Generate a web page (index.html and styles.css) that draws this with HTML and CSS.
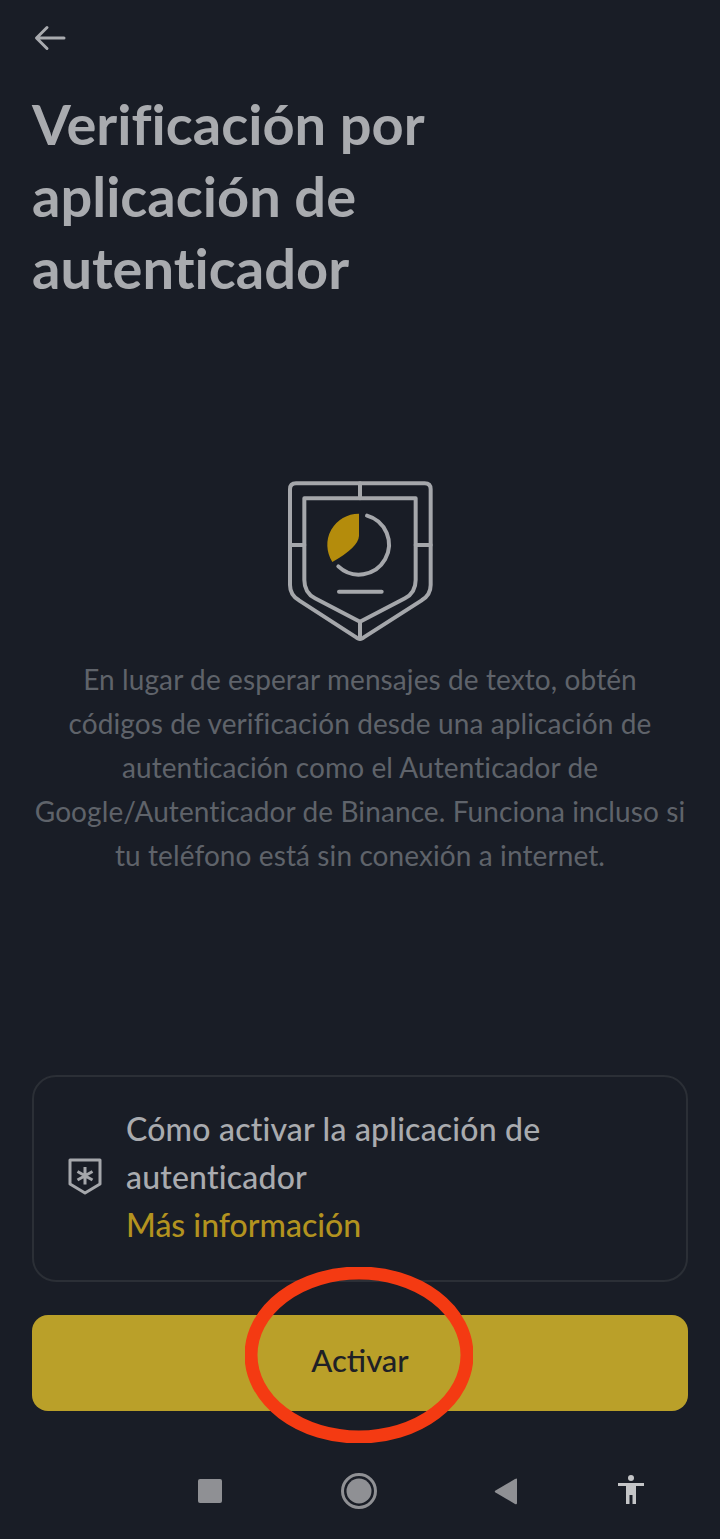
FILE: index.html
```html
<!DOCTYPE html>

<html>
    <head>
        <title>Verificación por aplicación de autenticador</title>
        <link rel="stylesheet" href="styles.css">
    </head>

    <body>
        <div class="screen">
            <div class="topbar">
                <svg class="back" viewBox="0 0 32 26" fill="none">
                    <path d="M3 13H30M13 2.500L2.500 13L13 23.500" />
                </svg>
            </div>

            <h1>Verificación por aplicación de autenticador</h1>

            <svg class="shield" viewBox="0 0 540 540" fill="none">
                <path class="line" d="M78 40H464Q482 40 482 58V345Q482 375 455 391L280 503Q270 509 260 503L87 391Q60 375 60 345V58Q60 40 78 40Z" />
                <path class="line" d="M103 85H437V330Q437 368 405 385L270 455L135 385Q103 368 103 330Z" />
                <path class="line" d="M270 40V85M60 225H103M437 225H482M270 455V507" />
                <path class="line" d="M291 137A90 90 0 1 1 205 289" />
                <path class="line" d="M207 365H335" />
                <path class="pie" d="M267 131V198Q265 232 187 276A94 94 0 0 1 267 131Z" />
            </svg>

            <p class="desc">En lugar de esperar mensajes de texto, obtén<br>códigos de verificación desde una aplicación de<br>autenticación como el Autenticador de<br>Google/Autenticador de Binance. Funciona incluso si<br>tu teléfono está sin conexión a internet.</p>

            <div class="card">
                <svg class="card-icon" viewBox="0 0 34 37" fill="none">
                    <path class="card-shield" d="M2 2H32V26L17 35L2 26Z" />
                    <path class="card-star" d="M17 9V26.500M9.500 13.500L24.500 22M24.500 13.500L9.500 22" />
                </svg>
                <div class="card-text">
                    <div class="card-title">Cómo activar la aplicación de autenticador</div>
                    <a href="#">Más información</a>
                </div>
            </div>

            <div class="action">
                <button type="button" class="btn-default">Activar</button>
                <svg class="circle-mark" viewBox="0 0 228 176" fill="none">
                    <ellipse cx="114" cy="88" rx="108" ry="82" />
                </svg>
            </div>

            <div class="navbar">
                <svg width="24" height="24" viewBox="0 0 24 24"><rect class="nav-fill" x="0" y="0" width="24" height="24" rx="2" /></svg>
                <svg width="36" height="36" viewBox="0 0 36 36">
                    <circle class="nav-ring" cx="18" cy="18" r="16.500" />
                    <circle class="nav-fill" cx="18" cy="18" r="12.500" />
                </svg>
                <svg width="24" height="27" viewBox="0 0 24 27"><path class="nav-fill" d="M23 1V25Q23 27 21 26L1.500 14.500Q0 13.500 1.500 12.500L21 1Q23 0 23 1Z" /></svg>
                <svg width="28" height="30" viewBox="0 0 28 30">
                    <circle class="nav-person" cx="14" cy="3" r="3" />
                    <path class="nav-person" d="M1 8H27V11H19V29H15.500V20H12.500V29H9V11H1Z" />
                </svg>
            </div>
        </div>
    </body>
</html>
```

FILE: styles.css
```css
* {box-sizing: border-box}

body {
  margin: 0;
  background-color: #191d26;
  font-family: Lato, "Open Sans", sans-serif;
  font-variant-ligatures: none;
}

.screen {
  height: 1539px;
  padding: 0 32px;
  display: flex;
  flex-direction: column;
  overflow: hidden;
}

.topbar {
  height: 88px;
  padding-top: 25px;
}

.back {
  display: block;
  width: 32px;
  height: 26px;
  margin-left: 2px;
  stroke: #a9abaf;
  stroke-width: 3;
  stroke-linecap: round;
  stroke-linejoin: round;
}

h1 {
  margin: 0;
  color: #a9abaf;
  font-size: 56px;
  line-height: 72px;
  font-weight: 700;
  width: 480px;
}

.shield {
  display: block;
  width: 180px;
  height: 180px;
  margin: 166px auto 0;
}

.line {
  stroke: #a5a7ab;
  stroke-width: 12;
  stroke-linecap: round;
  stroke-linejoin: round;
}

.pie {
  fill: #b48c0c;
}

.desc {
  margin: 7px 0 0;
  color: #5f636a;
  font-size: 28px;
  line-height: 44px;
  letter-spacing: 0.1px;
  text-align: center;
}

.card {
  margin-top: auto;
  height: 207px;
  padding: 0 32px 4px 34px;
  display: flex;
  align-items: center;
  gap: 24px;
  border: 2px solid #2b2f36;
  border-radius: 24px;
}

.card-icon {
  width: 34px;
  height: 37px;
  flex: none;
}

.card-shield {
  stroke: #a5a7ab;
  stroke-width: 3;
  stroke-linejoin: round;
}

.card-star {
  stroke: #a5a7ab;
  stroke-width: 3;
}

.card-text {
  color: #a9abaf;
  font-size: 32px;
  line-height: 48px;
  font-weight: 500;
  width: 480px;
}

.card-title {
  letter-spacing: 0.2px;
}

.card-text a {
  color: #b3931f;
  text-decoration: none;
}

.action {
  position: relative;
  margin-top: 33px;
}

.btn-default {
  display: block;
  width: 100%;
  height: 96px;
  padding: 0 0 6px;
  border: none;
  border-radius: 16px;
  background-color: #baa029;
  color: #1e2026;
  font-family: inherit;
  font-size: 31px;
  font-weight: 500;
}

/* red hand-drawn circle over the button */
.circle-mark {
  position: absolute;
  left: 213px;
  top: -48px;
  width: 228px;
  height: 176px;
  stroke: #f43a12;
  stroke-width: 13;
}

.navbar {
  height: 128px;
  margin: 0 -32px;
  padding: 62px 0 0 135px;
  display: grid;
  grid-template-columns: 150px 148px 146px 104px;
  justify-items: center;
  align-items: start;
}

.navbar svg:nth-child(1) {
  margin-top: 6px;
}

.navbar svg:nth-child(3) {
  margin-top: 5px;
}

.navbar svg:nth-child(4) {
  margin-top: 2px;
}

.nav-fill {
  fill: #8f9094;
}

.nav-ring {
  fill: none;
  stroke: #8f9094;
  stroke-width: 3;
}

.nav-person {
  fill: #c4c5c7;
}
```
